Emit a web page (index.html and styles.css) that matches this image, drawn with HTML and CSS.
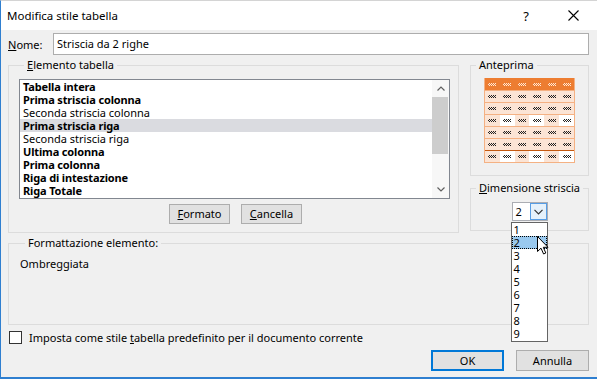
FILE: index.html
```html
<!DOCTYPE html>
<html>
<head>
<meta charset="utf-8">
<link rel="stylesheet" href="styles.css">
</head>
<body>
<div class="window">
  <div class="titlebar">
    <span class="title">Modifica stile tabella</span>
    <span class="help">?</span>
    <span class="close"><svg width="11" height="11" viewBox="0 0 11 11"><path d="M0.5 0.5 L10.5 10.5 M10.5 0.5 L0.5 10.5" stroke="#000" stroke-width="1.1" fill="none"/></svg></span>
  </div>
  <div class="content">
    <div class="name-row">
      <label class="name-label"><u>N</u>ome:</label>
      <div class="textbox">Striscia da 2 righe</div>
    </div>
    <div class="middle">
      <fieldset class="group group-elements">
        <legend><u>E</u>lemento tabella</legend>
        <div class="listbox">
          <div class="list-items">
            <div class="item bold">Tabella intera</div>
            <div class="item bold">Prima striscia colonna</div>
            <div class="item">Seconda striscia colonna</div>
            <div class="item bold selected">Prima striscia riga</div>
            <div class="item">Seconda striscia riga</div>
            <div class="item bold">Ultima colonna</div>
            <div class="item bold">Prima colonna</div>
            <div class="item bold">Riga di intestazione</div>
            <div class="item bold">Riga Totale</div>
          </div>
          <div class="scrollbar">
            <div class="sb-arrow"><svg width="8" height="5" viewBox="0 0 8 5"><path d="M0.5 4.5 L4 1 L7.5 4.5" stroke="#606060" stroke-width="1.2" fill="none"/></svg></div>
            <div class="sb-thumb"></div>
            <div class="sb-track"></div>
            <div class="sb-arrow"><svg width="8" height="5" viewBox="0 0 8 5"><path d="M0.5 0.5 L4 4 L7.5 0.5" stroke="#606060" stroke-width="1.2" fill="none"/></svg></div>
          </div>
        </div>
        <div class="list-buttons">
          <div class="button btn-small"><u>F</u>ormato</div>
          <div class="button btn-small"><u>C</u>ancella</div>
        </div>
      </fieldset>
      <div class="right-col">
        <fieldset class="group group-preview">
          <legend>Anteprima</legend>
          <div class="preview-wrap">
            <div class="preview" id="preview"></div>
          </div>
        </fieldset>
        <fieldset class="group group-stripe">
          <legend><u>D</u>imensione striscia</legend>
          <div class="select-wrap">
            <div class="select">
              <span class="select-value">2</span>
              <span class="select-btn"><svg width="9" height="6" viewBox="0 0 9 6"><path d="M0.5 0.8 L4.5 4.8 L8.5 0.8" stroke="#333" stroke-width="1.2" fill="none"/></svg></span>
              <div class="dropdown">
                <div class="dd-item">1</div>
                <div class="dd-item dd-selected">2</div>
                <div class="dd-item">3</div>
                <div class="dd-item">4</div>
                <div class="dd-item">5</div>
                <div class="dd-item">6</div>
                <div class="dd-item">7</div>
                <div class="dd-item">8</div>
                <div class="dd-item">9</div>
              </div>
              <svg class="cursor" width="12" height="19" viewBox="0 0 12 19"><path d="M0.5 0.5 L0.5 15.5 L4 12.2 L6.6 18 L8.8 17 L6.3 11.3 L11 11.3 Z" fill="#fff" stroke="#000" stroke-width="1" stroke-linejoin="miter"/></svg>
            </div>
          </div>
        </fieldset>
      </div>
    </div>
    <fieldset class="group group-format">
      <legend>Formattazione elemento:</legend>
      <div class="format-text">Ombreggiata</div>
    </fieldset>
    <div class="check-row">
      <span class="checkbox"></span>
      <span class="check-label">Imposta come stile <u>t</u>abella predefinito per il documento corrente</span>
    </div>
    <div class="dialog-buttons">
      <div class="button btn-main default">OK</div>
      <div class="button btn-main">Annulla</div>
    </div>
  </div>
</div>
<script>
(function () {
  var p = document.getElementById('preview');
  var html = '';
  for (var c = 0; c < 6; c++) html += '<div class="cell head"><span class="mk mk-light"></span></div>';
  for (var r = 1; r <= 6; r++) {
    for (var c2 = 1; c2 <= 6; c2++) {
      var white = (r === 3 || r === 6) && (c2 % 2 === 0);
      var cls = 'cell' + (white ? ' white' : '') + (r === 6 ? ' total' : '');
      html += '<div class="' + cls + '"><span class="mk"></span></div>';
    }
  }
  p.innerHTML = html;
})();
</script>
</body>
</html>
```
FILE: styles.css
```css
* { box-sizing: border-box; }
html, body { margin: 0; padding: 0; }
body {
  width: 597px;
  height: 379px;
  overflow: hidden;
  background: #fff;
  font-family: "Noto Sans", "Open Sans", sans-serif;
  font-size: 11px;
  color: #000;
}
u { text-decoration: underline; text-underline-offset: 1px; }

.window {
  width: 597px;
  height: 379px;
  border-left: 1px solid #2f7fd0;
  border-bottom: 2px solid #2f7fd0;
  border-top: 1px solid #d4d4d4;
  background: #f0f0f0;
  display: flex;
  flex-direction: column;
}
.titlebar {
  height: 29px;
  flex: none;
  background: #fff;
  display: flex;
  align-items: center;
  padding-left: 6px;
}
.title { flex: 1; font-size: 11.5px; }
.help { width: 20px; text-align: center; font-size: 13px; margin-right: 27px; }
.close { width: 20px; display: flex; justify-content: center; margin-right: 14px; }

.content { padding: 3px 8px 0 7px; display: flex; flex-direction: column; }

.name-row { display: flex; align-items: center; height: 22px; }
.name-label { width: 45px; }
.textbox {
  flex: 1;
  height: 22px;
  background: #fff;
  border: 1px solid #adadad;
  padding-left: 3px;
  line-height: 20px;
}

.group {
  margin: 0;
  padding: 0;
  border: 1px solid #dcdcdc;
  min-width: 0;
}
.group legend {
  padding: 0 3px;
  margin-left: 5px;
  line-height: 16px;
  height: 16px;
  white-space: nowrap;
}

.middle { display: flex; gap: 11px; margin-top: 2px; align-items: flex-start; }
.group-elements { width: 451px; padding: 6px 8px 8px 10px; }

.listbox {
  width: 431px;
  height: 120px;
  border: 1px solid #828790;
  background: #fff;
  display: flex;
}
.list-items { flex: 1; }
.item { height: 13px; line-height: 13px; padding-left: 3px; white-space: nowrap; }
.item.bold { font-weight: bold; letter-spacing: -0.15px; }
.item.selected { background: #dadbe0; }
.scrollbar { width: 17px; display: flex; flex-direction: column; background: #f7f7f7; }
.sb-arrow { height: 17px; display: flex; align-items: center; justify-content: center; }
.sb-thumb { height: 57px; background: #cdcdcd; margin: 0 1px 0 0; }
.sb-track { flex: 1; }

.list-buttons { display: flex; justify-content: center; gap: 11px; margin-top: 5px; padding-left: 2px; }
.button {
  background: #e1e1e1;
  border: 1px solid #adadad;
  text-align: center;
}
.btn-small { width: 61px; height: 20px; line-height: 18px; }

.right-col { width: 119px; display: flex; flex-direction: column; gap: 4px; }
.group-preview { padding: 5px 0 12px 0; }
.preview-wrap { display: flex; justify-content: center; }
.preview {
  width: 91px;
  height: 85px;
  display: grid;
  grid-template-columns: repeat(6, 1fr);
  grid-template-rows: repeat(7, 12px);
  border: 1px solid #f4b183;
  border-top: none;
  background: #fbe4d5;
}
.cell {
  display: flex;
  align-items: center;
  justify-content: center;
  background: #fbe4d5;
  border-top: 1px solid #f4b183;
}
.cell.head { background: #ed7d31; border-top: none; }
.cell.white { background: #fff; }
.cell.total { border-top: 1px solid #c55a11; }
.mk {
  width: 8px;
  height: 3px;
  background: repeating-conic-gradient(#222 0 25%, transparent 0 50%) 0 0 / 2px 2px;
}
.mk-light {
  background: repeating-conic-gradient(#fde9d9 0 25%, transparent 0 50%) 0 0 / 2px 2px;
}

.group-stripe { padding: 6px 0 9px 0; }
.select-wrap { display: flex; justify-content: center; }
.select {
  position: relative;
  width: 36px;
  height: 19px;
  background: #fff;
  border: 1px solid #abadb3;
  display: flex;
}
.select-value { width: 16px; padding-left: 3px; line-height: 17px; }
.select-btn {
  flex: 1;
  border: 1px solid #569de5;
  background: #e5f1fb;
  margin: 0 0 0 1px;
  display: flex;
  align-items: center;
  justify-content: center;
}
.dropdown {
  position: absolute;
  left: -2px;
  top: 19px;
  width: 37px;
  height: 120px;
  background: #fff;
  border: 1px solid #646464;
  padding-top: 0;
  z-index: 2;
}
.dd-item { height: 13px; line-height: 13px; padding-left: 2px; font-size: 11px; }
.dd-selected { background: #99c9ef; outline: 1px dotted #000; outline-offset: -1px; }
.cursor { position: absolute; left: 24px; top: 33px; z-index: 3; }

.group-format { margin-top: 2px; height: 90px; padding: 5px 0 0 11px; }
.format-text { line-height: 16px; }

.check-row { display: flex; align-items: center; margin-top: 6px; height: 13px; }
.checkbox { width: 13px; height: 13px; border: 1px solid #333; background: #fff; margin-left: 1px; }
.check-label { margin-left: 7px; }

.dialog-buttons { display: flex; justify-content: flex-end; gap: 12px; margin-top: 6px; }
.btn-main { width: 73px; height: 21px; line-height: 19px; }
.btn-main.default { border: 2px solid #0078d7; line-height: 17px; }
```
